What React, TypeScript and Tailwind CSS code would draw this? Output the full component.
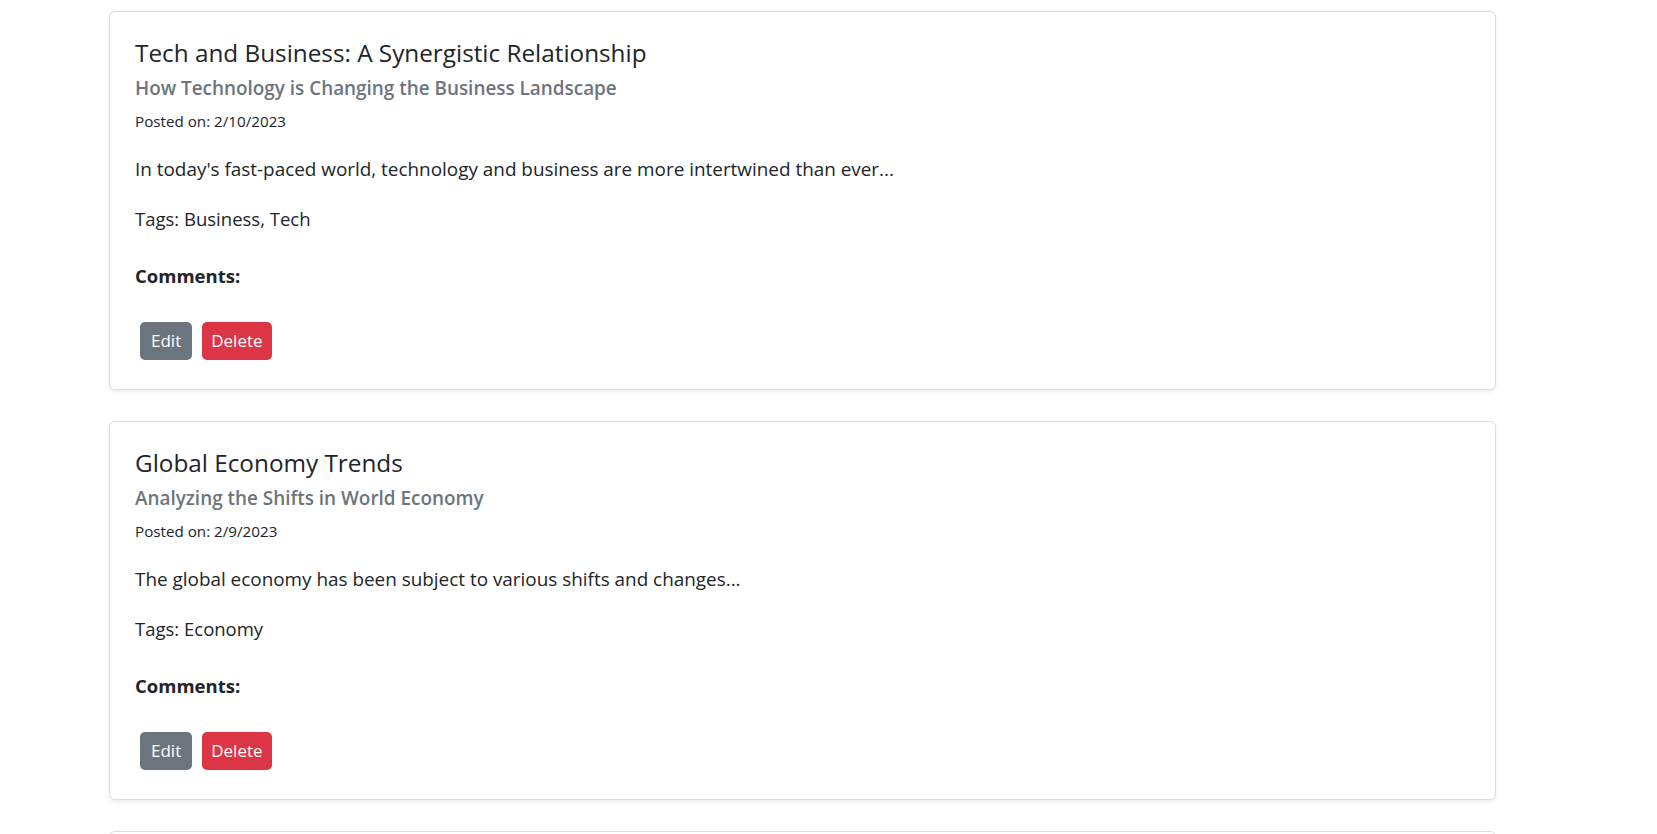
const posts = [
  {
    title: "Tech and Business: A Synergistic Relationship",
    subtitle: "How Technology is Changing the Business Landscape",
    date: "2/10/2023",
    body: "In today's fast-paced world, technology and business are more intertwined than ever...",
    tags: ["Business", "Tech"],
  },
  {
    title: "Global Economy Trends",
    subtitle: "Analyzing the Shifts in World Economy",
    date: "2/9/2023",
    body: "The global economy has been subject to various shifts and changes...",
    tags: ["Economy"],
  },
  {
    title: "The Future of Remote Work",
    subtitle: "How Teams Are Adapting",
    date: "2/8/2023",
    body: "Remote work is here to stay...",
    tags: ["Work"],
  },
];

function PostCard({ post }: { post: (typeof posts)[number] }) {
  return (
    <div className="mb-[31px] rounded-[6px] border border-[#dcdcdc] bg-white shadow-[0_2px_4px_rgba(0,0,0,0.075)]">
      <div className="px-[25px] py-[24px]">
        <h5 className="text-[24.3px] leading-[34px] font-normal text-[#212529]">{post.title}</h5>
        <h6 className="mt-[5px] text-[18.9px] leading-[27px] font-semibold text-[#6c757d]">
          {post.subtitle}
        </h6>
        <p className="mt-[4px] text-[15.2px] leading-[30px] text-[#212529]">Posted on: {post.date}</p>
        <p className="mt-[18px] text-[18.9px] leading-[30px] text-[#212529]">{post.body}</p>
        <p className="mt-[20px] text-[18.5px] leading-[30px] text-[#212529]">
          Tags: {post.tags.join(", ")}
        </p>
        <h6 className="mt-[27px] text-[18.5px] leading-[30px] font-bold text-[#212529]">Comments:</h6>
        <div className="mt-[26px] flex">
          <button className="m-[5px] h-[38px] rounded-[5px] bg-[#6c757d] px-[11px] text-[17px] text-white">
            Edit
          </button>
          <button className="m-[5px] h-[38px] rounded-[5px] bg-[#dc3545] px-[9px] text-[17px] text-white">
            Delete
          </button>
        </div>
      </div>
    </div>
  );
}

export default function App() {
  return (
    <div className="min-h-screen bg-white font-['Open_Sans',sans-serif]">
      <div className="ml-[109px] w-[1387px] pt-[11px]">
        {posts.map((p) => (
          <PostCard key={p.title} post={p} />
        ))}
      </div>
    </div>
  );
}
